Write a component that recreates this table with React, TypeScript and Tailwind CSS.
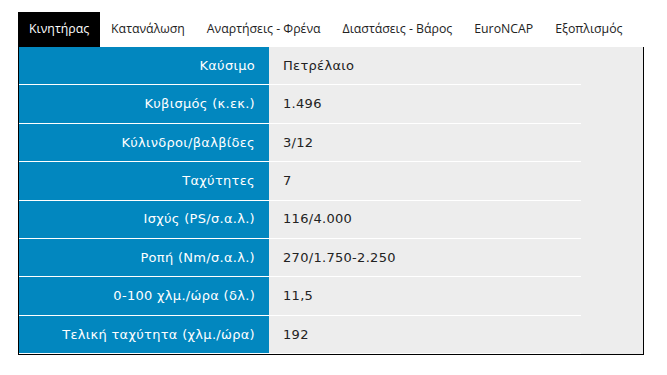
import React from "react";

const tabs = ["Κινητήρας", "Κατανάλωση", "Αναρτήσεις - Φρένα", "Διαστάσεις - Βάρος", "EuroNCAP", "Εξοπλισμός"];

const rows: [string, string][] = [
  ["Καύσιμο", "Πετρέλαιο"],
  ["Κυβισμός (κ.εκ.)", "1.496"],
  ["Κύλινδροι/βαλβίδες", "3/12"],
  ["Ταχύτητες", "7"],
  ["Ισχύς (PS/σ.α.λ.)", "116/4.000"],
  ["Ροπή (Nm/σ.α.λ.)", "270/1.750-2.250"],
  ["0-100 χλμ./ώρα (δλ.)", "11,5"],
  ["Τελική ταχύτητα (χλμ./ώρα)", "192"],
];

export default function App() {
  return (
    <div className="w-[667px] h-[375px] bg-white pt-[12px] pl-[18px]">
      <div className="flex h-[35px] items-center font-['Open_Sans',sans-serif] text-[12.3px] text-[#222]">
        {tabs.map((t, i) => (
          <div
            key={t}
            className={
              i === 0
                ? "h-full flex items-center px-[11px] bg-black text-white"
                : "h-full flex items-center px-[11px]"
            }
          >
            {t}
          </div>
        ))}
      </div>
      <div className="w-[626px] border border-black border-t-0 bg-[#ededed] relative">
        <div className="w-[562px] font-['DejaVu_Sans',sans-serif] text-[13px] tracking-[0.3px]">
          {rows.map(([k, v]) => (
            <div key={k} className="flex h-[38.375px] border-b border-white">
              <div className="w-[250px] bg-[#0287bf] text-white flex items-center justify-end pr-[14px]">
                {k}
              </div>
              <div className="flex-1 flex items-center pl-[14px] text-[#222]">{v}</div>
            </div>
          ))}
        </div>
      </div>
    </div>
  );
}
